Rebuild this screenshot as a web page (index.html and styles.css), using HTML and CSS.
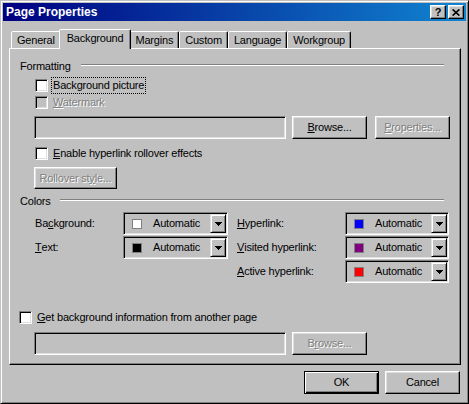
FILE: index.html
```html
<!DOCTYPE html>
<html>
<head>
<meta charset="utf-8">
<title>Page Properties</title>
<link rel="stylesheet" href="styles.css">
</head>
<body>
<div class="window">
  <div class="titlebar">
    <span class="title">Page Properties</span>
    <div class="caption-btns">
      <span class="cbtn help">?</span>
      <span class="cbtn close"><svg width="8" height="7" viewBox="0 0 8 7"><path d="M0.6 0.4 L7.4 6.6 M7.4 0.4 L0.6 6.6" stroke="#000" stroke-width="1.6" fill="none"/></svg></span>
    </div>
  </div>
  <div class="content">
    <div class="tabs">
      <div class="tab">General</div>
      <div class="tab active">Background</div>
      <div class="tab">Margins</div>
      <div class="tab">Custom</div>
      <div class="tab">Language</div>
      <div class="tab">Workgroup</div>
    </div>
    <div class="panel">
      <div class="group-head"><span>Formatting</span><div class="rule"></div></div>
      <div class="row row-bgpic"><span class="cb"></span><span class="lbl focus">Background picture</span></div>
      <div class="row row-water"><span class="cb disabled"></span><span class="lbl dis"><u>W</u>atermark</span></div>
      <div class="field-row field-row-1">
        <div class="field"></div>
        <button class="btn btn-browse"><u>B</u>rowse...</button>
        <button class="btn btn-props dis"><u>P</u>roperties...</button>
      </div>
      <div class="row row-enable"><span class="cb"></span><span class="lbl"><u>E</u>nable hyperlink rollover effects</span></div>
      <button class="btn btn-rollover dis">Rollover st<u>y</u>le...</button>
      <div class="group-head group-colors"><span>Colors</span><div class="rule rule-colors"></div></div>
      <div class="colors">
        <div class="clabel">Ba<u>c</u>kground:</div>
        <div class="combo"><span class="swatch sw-white"></span><span class="combo-text">Automatic</span><span class="arrow"><svg width="7" height="4" viewBox="0 0 7 4"><path d="M0 0h7v1h-1v1h-1v1h-1v1h-1v-1h-1v-1h-1v-1h-1z" fill="#000"/></svg></span></div>
        <div class="clabel"><u>H</u>yperlink:</div>
        <div class="combo combo-r"><span class="swatch sw-blue"></span><span class="combo-text">Automatic</span><span class="arrow"><svg width="7" height="4" viewBox="0 0 7 4"><path d="M0 0h7v1h-1v1h-1v1h-1v1h-1v-1h-1v-1h-1v-1h-1z" fill="#000"/></svg></span></div>
        <div class="clabel"><u>T</u>ext:</div>
        <div class="combo"><span class="swatch sw-black"></span><span class="combo-text">Automatic</span><span class="arrow"><svg width="7" height="4" viewBox="0 0 7 4"><path d="M0 0h7v1h-1v1h-1v1h-1v1h-1v-1h-1v-1h-1v-1h-1z" fill="#000"/></svg></span></div>
        <div class="clabel"><u>V</u>isited hyperlink:</div>
        <div class="combo combo-r"><span class="swatch sw-purple"></span><span class="combo-text">Automatic</span><span class="arrow"><svg width="7" height="4" viewBox="0 0 7 4"><path d="M0 0h7v1h-1v1h-1v1h-1v1h-1v-1h-1v-1h-1v-1h-1z" fill="#000"/></svg></span></div>
        <div class="clabel col3"><u>A</u>ctive hyperlink:</div>
        <div class="combo combo-r"><span class="swatch sw-red"></span><span class="combo-text">Automatic</span><span class="arrow"><svg width="7" height="4" viewBox="0 0 7 4"><path d="M0 0h7v1h-1v1h-1v1h-1v1h-1v-1h-1v-1h-1v-1h-1z" fill="#000"/></svg></span></div>
      </div>
      <div class="row row-get"><span class="cb"></span><span class="lbl"><u>G</u>et background information from another page</span></div>
      <div class="field-row field-row-2">
        <div class="field"></div>
        <button class="btn btn-browse dis">B<u>r</u>owse...</button>
      </div>
    </div>
    <div class="footer">
      <button class="btn default">OK</button>
      <button class="btn">Cancel</button>
    </div>
  </div>
</div>
</body>
</html>
```

FILE: styles.css
```css
html, body {
  margin: 0;
  padding: 0;
  background: #c0c0c0;
}
body {
  font-family: "Liberation Sans", Arial, sans-serif;
  font-size: 11px;
  letter-spacing: -0.2px;
  color: #000;
}
u { text-decoration: underline; text-underline-offset: 1px; }

.window {
  width: 469px;
  height: 404px;
  box-sizing: border-box;
  border: 1px solid;
  border-color: #c0c0c0 #000 #000 #c0c0c0;
  box-shadow: inset 1px 1px #fff, inset -1px -1px #808080;
  padding: 2px;
  background: #c0c0c0;
  display: flex;
  flex-direction: column;
}

.titlebar {
  height: 18px;
  flex: none;
  background: linear-gradient(to right, #000080, #1084d0);
  display: flex;
  align-items: center;
  padding: 0 2px 0 2px;
}
.title {
  flex: 1;
  color: #fff;
  font-weight: bold;
  font-size: 12px;
  letter-spacing: 0;
  line-height: 18px;
  padding-left: 1px;
}
.caption-btns {
  display: flex;
  gap: 2px;
}
.cbtn {
  width: 16px;
  height: 14px;
  box-sizing: border-box;
  background: #c0c0c0;
  border: 1px solid;
  border-color: #fff #000 #000 #fff;
  box-shadow: inset -1px -1px #808080, inset 1px 1px #dfdfdf;
  display: flex;
  align-items: center;
  justify-content: center;
  font-weight: bold;
  font-size: 11px;
  line-height: 11px;
}

.content {
  padding: 8px 0 0 6px;
}

.tabs {
  display: flex;
  align-items: flex-end;
  height: 20px;
  padding-left: 2px;
  position: relative;
  z-index: 1;
}
.tab {
  height: 17px;
  box-sizing: border-box;
  margin-bottom: 1px;
  padding: 2px 5px 0;
  border: 1px solid;
  border-bottom: none;
  border-color: #fff #000 transparent #fff;
  box-shadow: inset -1px 0 #808080;
  border-radius: 2px 2px 0 0;
  background: #c0c0c0;
  line-height: 13px;
  white-space: nowrap;
}
.tab.active {
  height: 20px;
  margin: 0 -2px;
  padding: 2px 7px 0;
  position: relative;
  z-index: 2;
}

.panel {
  width: 452px;
  height: 317px;
  box-sizing: border-box;
  margin-top: -1px;
  border: 1px solid;
  border-color: #fff #000 #000 #fff;
  box-shadow: inset -1px -1px #808080;
  padding: 11px 0 0 10px;
  display: flex;
  flex-direction: column;
  align-items: flex-start;
}

.group-head {
  display: flex;
  align-items: flex-start;
  height: 13px;
  line-height: 13px;
  align-self: stretch;
  margin-right: 16px;
}
.rule {
  flex: 1;
  height: 0;
  border-top: 1px solid #808080;
  border-bottom: 1px solid #fff;
  margin: 4px 0 0 10px;
}
.rule-colors { margin-left: 9px; }
.group-colors { margin-top: 6px; }

.row {
  display: flex;
  align-items: center;
  height: 13px;
  line-height: 13px;
  margin-left: 15px;
}
.row-bgpic { margin-top: 6px; }
.row-water { margin-top: 4px; }
.row-enable { margin-top: 8px; }
.row-get { margin-top: 28px; margin-left: -1px; }

.cb {
  width: 13px;
  height: 13px;
  flex: none;
  box-sizing: border-box;
  background: #fff;
  border: 1px solid;
  border-color: #808080 #fff #fff #808080;
  box-shadow: inset 1px 1px #000, inset -1px -1px #dfdfdf;
}
.cb.disabled { background: #c0c0c0; }
.lbl {
  margin-left: 5px;
  white-space: nowrap;
}
.lbl.focus {
  margin-left: 3px;
  padding: 1px;
  border: 1px dotted #000;
}
.dis {
  color: #808080;
  text-shadow: 1px 1px 0 #fff;
}

.field-row {
  display: flex;
  height: 23px;
  margin-left: 14px;
}
.field-row-1 { margin-top: 7px; }
.field-row-2 { margin-top: 8px; }
.field {
  width: 252px;
  height: 23px;
  box-sizing: border-box;
  border: 1px solid;
  border-color: #808080 #fff #fff #808080;
  box-shadow: inset 1px 1px #000, inset -1px -1px #dfdfdf;
  background: #c0c0c0;
}

.btn {
  width: 75px;
  height: 23px;
  box-sizing: border-box;
  padding: 0;
  margin: 0;
  background: #c0c0c0;
  border: 1px solid;
  border-color: #fff #000 #000 #fff;
  box-shadow: inset -1px -1px #808080, inset 1px 1px #dfdfdf;
  font-family: inherit;
  font-size: 11px;
  letter-spacing: -0.2px;
  line-height: 13px;
  color: #000;
  border-radius: 0;
}
.btn.dis { color: #808080; }
.btn-browse { margin-left: 6px; }
.btn-props { margin-left: 8px; }
.btn-rollover {
  width: 83px;
  height: 22px;
  margin: 7px 0 0 14px;
}
.btn.default {
  border-color: #000;
  box-shadow: inset 1px 1px #fff, inset -1px -1px #000, inset -2px -2px #808080;
}

.colors {
  display: grid;
  grid-template-columns: 88px 114px 108px 104px;
  grid-auto-rows: 23px;
  row-gap: 1px;
  margin: 4px 0 0 15px;
}
.clabel {
  display: flex;
  align-items: center;
  line-height: 13px;
  white-space: nowrap;
}
.col3 { grid-column: 3; }
.combo {
  width: 105px;
  height: 23px;
  box-sizing: border-box;
  border: 1px solid;
  border-color: #808080 #fff #fff #808080;
  box-shadow: inset 1px 1px #000, inset -1px -1px #dfdfdf;
  padding: 1px;
  display: flex;
  align-items: center;
}
.combo-r { width: 104px; }
.swatch {
  width: 10px;
  height: 10px;
  box-sizing: border-box;
  border: 1px solid #808080;
  margin-left: 7px;
  flex: none;
}
.sw-white { background: #fff; }
.sw-black { background: #000; }
.sw-blue { background: #0000ff; }
.sw-purple { background: #800080; }
.sw-red { background: #ff0000; }
.combo-text {
  flex: 1;
  margin-left: 11px;
  line-height: 13px;
}
.arrow {
  width: 16px;
  height: 19px;
  flex: none;
  box-sizing: border-box;
  border: 1px solid;
  border-color: #dfdfdf #000 #000 #dfdfdf;
  box-shadow: inset 1px 1px #fff, inset -1px -1px #808080;
  display: flex;
  align-items: center;
  justify-content: center;
}
.arrow svg { display: block; }

.footer {
  display: flex;
  justify-content: flex-end;
  gap: 6px;
  width: 451px;
  margin-top: 6px;
}
```
